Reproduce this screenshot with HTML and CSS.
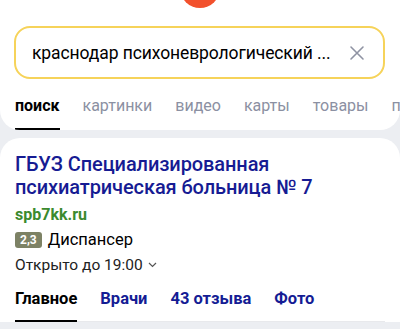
FILE: index.html
```html
<!DOCTYPE html>
<html lang="ru">

<head>
    <meta charset="UTF-8">
    <meta name="viewport" content="width=device-width, initial-scale=1.0">
    <title>Поиск</title>
    <link rel="stylesheet" href="styles.css">
</head>

<body>
    <!-- Header with logo, search field and verticals -->
    <header class="header">
        <div class="logo"></div>

        <div class="search">
            <span class="query">краснодар психоневрологический ...</span>
            <svg class="clear" width="16" height="16" viewBox="0 0 16 16">
                <path d="M2 2 L14 14 M14 2 L2 14" stroke="#8f93a3" stroke-width="1.6" fill="none" stroke-linecap="round" />
            </svg>
        </div>

        <nav class="verticals">
            <a class="vertical active">поиск</a>
            <a class="vertical">картинки</a>
            <a class="vertical">видео</a>
            <a class="vertical">карты</a>
            <a class="vertical">товары</a>
            <a class="vertical">по</a>
        </nav>
    </header>

    <!-- Organization card -->
    <section class="card">
        <h1 class="org-title">ГБУЗ Специализированная психиатрическая больница № 7</h1>
        <div class="org-site">spb7kk.ru</div>

        <div class="org-rating">
            <span class="badge">2,3</span>
            <span class="org-type">Диспансер</span>
        </div>

        <div class="org-hours">
            Открыто до 19:00
            <svg class="chevron" width="9" height="6" viewBox="0 0 9 6">
                <path d="M1 1 L4.5 4.5 L8 1" stroke="#555" stroke-width="1.2" fill="none" />
            </svg>
        </div>

        <nav class="org-tabs">
            <a class="org-tab active">Главное</a>
            <a class="org-tab">Врачи</a>
            <a class="org-tab">43 отзыва</a>
            <a class="org-tab">Фото</a>
        </nav>
    </section>
</body>

</html>
```

FILE: styles.css
```css
/* whole page */
* {
    margin: 0;
    padding: 0;
    box-sizing: border-box;
}

body {
    background: #eceef2;
    font-family: "Roboto", "Noto Sans", sans-serif;
    color: #000;
    overflow: hidden;
}

/* Top block */
.header {
    background: #fff;
    border-radius: 0 0 20px 20px;
    overflow: hidden;
}

.logo {
    width: 40px;
    height: 40px;
    margin: -32px auto 0;
    border-radius: 50%;
    background: #f2512d;
}

/* Search field */
.search {
    display: flex;
    align-items: center;
    height: 53px;
    margin: 18px 15px 0 14px;
    padding: 0 18px 0 16px;
    border: 2px solid #f6d35a;
    border-radius: 16px;
}

.query {
    flex: 1;
    font-size: 17.5px;
    letter-spacing: -0.1px;
    white-space: nowrap;
}

.clear {
    flex: none;
}

/* Search verticals */
.verticals {
    display: flex;
    gap: 23px;
    margin-top: 14px;
    padding-left: 15px;
    white-space: nowrap;
}

.vertical {
    padding: 3px 0 13px;
    font-size: 16px;
    color: #8b90a2;
    border-bottom: 2px solid transparent;
}

.vertical.active {
    color: #000;
    font-weight: 700;
    border-bottom-color: #000;
}

/* Organization card */
.card {
    margin-top: 8px;
    padding: 15px 15px 0;
    background: #fff;
    border-radius: 20px 20px 0 0;
}

.org-title {
    font-size: 20px;
    line-height: 23px;
    letter-spacing: -0.1px;
    font-weight: 500;
    color: #161b93;
}

.org-site {
    margin-top: 6px;
    font-size: 16px;
    font-weight: 700;
    color: #3b8a2e;
}

.org-rating {
    display: flex;
    align-items: center;
    gap: 6px;
    margin-top: 6px;
}

.badge {
    padding: 0 5px;
    height: 16px;
    line-height: 16px;
    border-radius: 3px;
    background: #7d8265;
    color: #fff;
    font-size: 12px;
    font-weight: 700;
}

.org-type {
    font-size: 16.5px;
}

.org-hours {
    display: flex;
    align-items: center;
    gap: 5px;
    margin-top: 7px;
    font-size: 15.5px;
    color: #222;
}

/* Card tabs */
.org-tabs {
    display: flex;
    gap: 23px;
    margin-top: 15px;
    border-bottom: 1px solid #e8e9ec;
}

.org-tab {
    padding-bottom: 12px;
    font-size: 16.5px;
    font-weight: 700;
    color: #141c94;
    border-bottom: 2px solid transparent;
    margin-bottom: -1px;
}

.org-tab.active {
    color: #000;
    border-bottom-color: #000;
}
```
